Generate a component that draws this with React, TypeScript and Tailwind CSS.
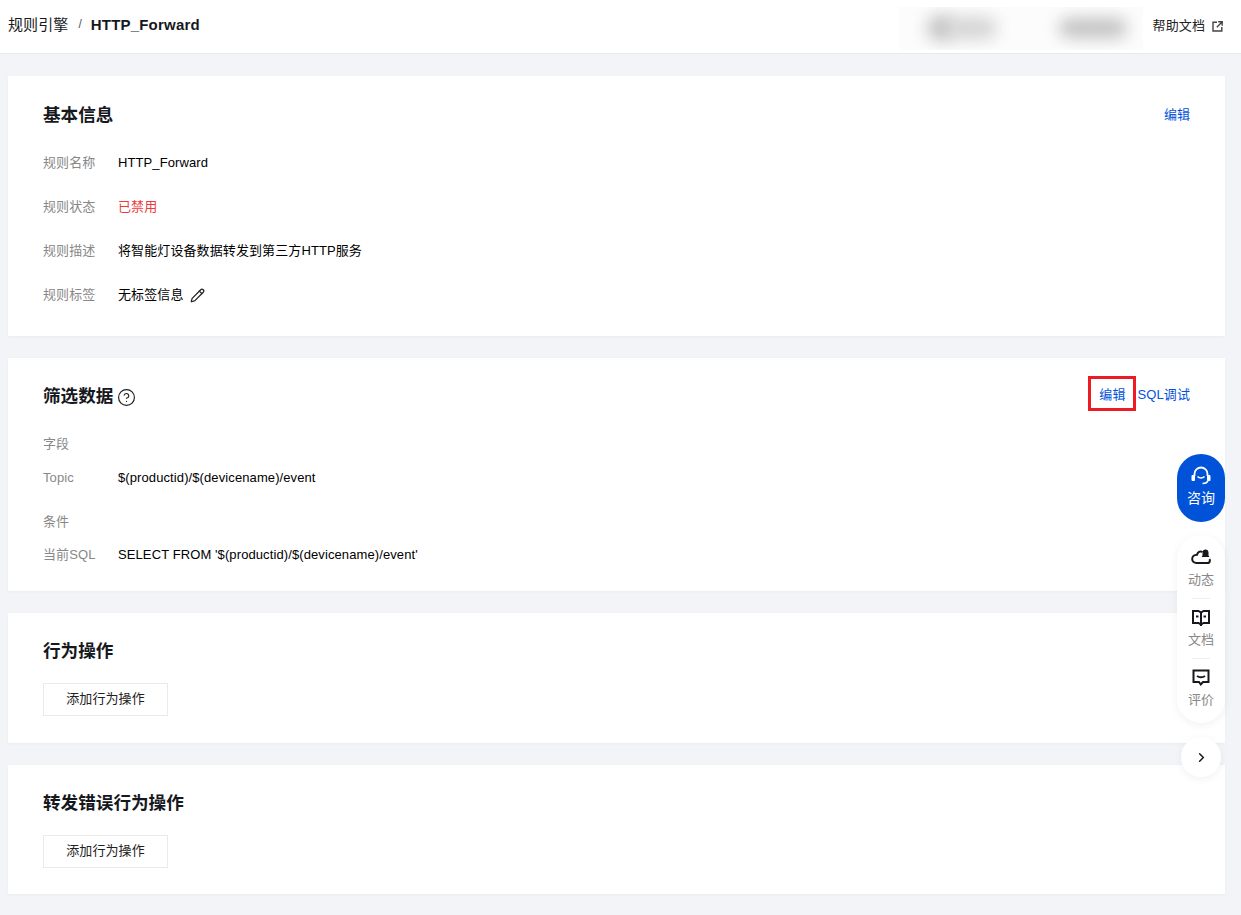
import React from 'react';
import { ChevronRight, CircleHelp, Pencil } from 'lucide-react';

const font = { fontFamily: '"Liberation Sans", "Noto Sans CJK SC", sans-serif' };

const Row: React.FC<{ label: string; children: React.ReactNode; className?: string }> = ({ label, children, className }) => (
  <div className={`flex items-center h-5 text-[13px] leading-5 tracking-[0.1px] ${className ?? ''}`}>
    <span className="w-[75px] shrink-0 text-[#888888]">{label}</span>
    <span className="flex items-center text-black">{children}</span>
  </div>
);

const AddCard: React.FC<{ title: string; height: string }> = ({ title, height }) => (
  <section className={`bg-white px-[35px] pt-[24px] shadow-[0_1px_3px_rgba(0,0,0,0.04)] ${height}`}>
    <h2 className="text-[17.6px] leading-[28px] font-bold text-[#16181d]">{title}</h2>
    <button className="mt-[18px] flex items-center justify-center w-[125px] h-[33px] pb-[2px] border border-[#e7eaef] bg-white text-[13px] tracking-[0.1px] text-[#222222]">
      添加行为操作
    </button>
  </section>
);

const SideItem: React.FC<{ icon: React.ReactNode; label: string; divider?: boolean }> = ({ icon, label, divider }) => (
  <div className="flex flex-col items-center">
    {divider && <div className="w-[18px] h-px bg-[#eceef2] mb-[9px]" />}
    <div className="h-[20px] flex items-center justify-center">{icon}</div>
    <span className="text-[13px] leading-[20px] text-[#888888] mt-[2px]">{label}</span>
  </div>
);

export default function App() {
  return (
    <div className="relative min-h-[915px] bg-[#f2f4f8]" style={font}>
      {/* top bar */}
      <header className="h-[54px] bg-white border-b border-[#e7eaef] flex items-center pl-2 pr-[18px] pb-[2px]">
        <span className="text-[15px] tracking-[0.1px] text-[#16181d]">规则引擎</span>
        <span className="ml-[10px] text-[12px] text-[#555555] -translate-y-[2px]">/</span>
        <span className="ml-[9px] text-[15px] tracking-[0.2px] font-bold text-[#16181d]">HTTP_Forward</span>
        <div className="ml-auto flex items-center">
          {/* masked account area */}
          <div className="relative w-[244px] h-[43px] mt-[6px] overflow-hidden bg-[#fcfcfc]">
            <div className="absolute left-[28px] top-[8px] w-[30px] h-[26px] rounded-full bg-[#c4c4c4] blur-[8px]" />
            <div className="absolute left-[50px] top-[10px] w-[48px] h-[22px] rounded-full bg-[#d4d4d4] blur-[8px]" />
            <div className="absolute left-[160px] top-[11px] w-[68px] h-[20px] rounded-full bg-[#c2c2c2] blur-[8px]" />
          </div>
          <span className="ml-[10px] text-[13px] tracking-[0.1px] text-[#222222]">帮助文档</span>
          <svg className="ml-[7px] mt-[2px]" width="11" height="11" viewBox="0 0 11 11" fill="none" stroke="#444444" strokeWidth="1.4">
            <path d="M5 1.200H1v8.800h8.800V6" />
            <path d="M6.200 .8h4v4M10 1 4.800 6.200" />
          </svg>
        </div>
      </header>

      <main className="flex flex-col gap-[22px] pl-2 pr-4 pt-[22px] pb-[21px]">
        {/* basic info */}
        <section className="relative bg-white h-[260px] px-[35px] pt-[26px] shadow-[0_1px_3px_rgba(0,0,0,0.04)]">
          <div className="flex items-center justify-between h-[28px]">
            <h2 className="pb-[2px] text-[17.6px] leading-[28px] font-bold text-[#16181d]">基本信息</h2>
            <a className="text-[13px] text-[#0052d9] -translate-y-[1px]">编辑</a>
          </div>
          <div className="mt-[23px] flex flex-col gap-[24px]">
            <Row label="规则名称">HTTP_Forward</Row>
            <Row label="规则状态"><span className="text-[#ed3b3b]">已禁用</span></Row>
            <Row label="规则描述">将智能灯设备数据转发到第三方HTTP服务</Row>
            <Row label="规则标签">
              无标签信息
              <Pencil className="ml-[6px]" size={15} strokeWidth={2} color="#222222" />
            </Row>
          </div>
        </section>

        {/* filter data */}
        <section className="relative bg-white h-[233px] px-[35px] pt-[24px] shadow-[0_1px_3px_rgba(0,0,0,0.04)]">
          <div className="flex items-center justify-between h-[28px]">
            <div className="flex items-center">
              <h2 className="text-[17.6px] leading-[28px] font-bold text-[#16181d]">筛选数据</h2>
              <CircleHelp className="ml-[4px] mt-[3px]" size={19} strokeWidth={1.5} color="#222222" />
            </div>
            <div className="flex items-center text-[13px] tracking-[0.1px] text-[#0052d9] -translate-y-[1px]">
              <a className="relative mr-[12px]">
                编辑
                <span className="absolute -left-[11px] -top-[9px] w-[48px] h-[35px] border-[3px] border-[#ed1c24]" />
              </a>
              <a>SQL调试</a>
            </div>
          </div>
          <div className="mt-[24px] text-[13px] leading-5 tracking-[0.1px] text-[#888888]">字段</div>
          <Row label="Topic" className="mt-[14px]">{'$(productid)/$(devicename)/event'}</Row>
          <div className="mt-[24px] text-[13px] leading-5 tracking-[0.1px] text-[#888888]">条件</div>
          <Row label="当前SQL" className="mt-[13px]">{"SELECT FROM '$(productid)/$(devicename)/event'"}</Row>
        </section>

        <AddCard title="行为操作" height="h-[130px]" />
        <AddCard title="转发错误行为操作" height="h-[129px]" />
      </main>

      {/* floating consult widgets */}
      <div className="absolute left-[1177px] top-[454px] w-[48px] flex flex-col items-center">
        <div className="w-[48px] h-[68px] rounded-[24px] bg-[#0052d9] flex flex-col items-center pt-[12px] text-white">
          <svg width="22" height="20" viewBox="0 0 22 20" fill="none" stroke="#ffffff">
            <path d="M4.500 10V8a6.500 6.500 0 0 1 13 0v2" strokeWidth="1.800" />
            <path d="M2 9.500h2.500v5H2zM17.500 9.500H20v5h-2.500z" fill="#ffffff" strokeWidth="1" />
            <path d="M7.500 10.500c2 1.800 5 1.800 7 0" strokeWidth="1.600" />
            <path d="M18 14.500c-.5 2-2.500 3-5.500 3" strokeWidth="1.500" />
          </svg>
          <span className="text-[14px] leading-[20px] mt-[2px]">咨询</span>
        </div>
        <div className="mt-[13px] w-[48px] h-[188px] rounded-[24px] bg-white shadow-[0_2px_10px_rgba(0,0,0,0.06)] flex flex-col items-center pt-[13px] gap-[8px]">
          <SideItem
            label="动态"
            icon={
              <svg width="20" height="18" viewBox="0 0 20 18" fill="none">
                <path d="M11.500 3C9 1.500 6.500 3 6 5.800 3 5.800 1.200 7.800 1.200 10c0 2.300 1.800 4 4.300 4H16c1.700 0 2.900-1 2.900-2.600 0-.5-.1-1-.4-1.400" stroke="#16181d" strokeWidth="2" />
                <path d="M14.500 .5c1.800 0 3 1.300 3 3v3l1 1.500h-8l1-1.500v-3c0-1.700 1.200-3 3-3z" fill="#16181d" />
              </svg>
            }
          />
          <SideItem
            divider
            label="文档"
            icon={
              <svg width="20" height="18" viewBox="0 0 20 18" fill="none" stroke="#16181d" strokeWidth="2">
                <path d="M2 2h5.500L10 3.500 12.500 2H18v12h-5.500L10 15.500 7.500 14H2z" />
                <path d="M10 3.500V17" />
                <path d="M5 7.500h2.500M12.500 7.500H15" />
              </svg>
            }
          />
          <SideItem
            divider
            label="评价"
            icon={
              <svg width="20" height="18" viewBox="0 0 20 18" fill="none" stroke="#16181d" strokeWidth="2">
                <path d="M2.500 1.500h15v11.500h-5.500L9.800 15.500 8 13H2.500z" />
                <path d="M6 7c2.200 1.500 5.800 1.500 8 0" />
              </svg>
            }
          />
        </div>
        <div className="mt-[14px] w-[40px] h-[40px] rounded-full bg-white shadow-[0_2px_10px_rgba(0,0,0,0.06)] flex items-center justify-center">
          <ChevronRight size={15} strokeWidth={2.4} color="#16181d" />
        </div>
      </div>
    </div>
  );
}
